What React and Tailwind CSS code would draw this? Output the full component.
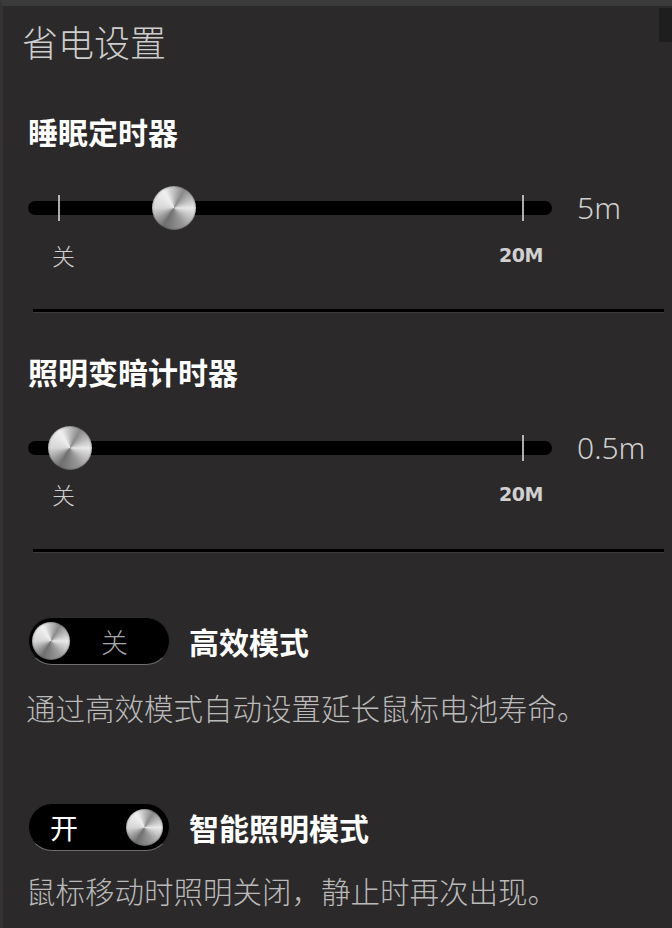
import React from 'react';

const font = "font-['Noto_Sans_CJK_SC','Noto_Sans',sans-serif]";
const knob = 'rounded-full bg-[conic-gradient(from_30deg,#8a8a8a,#e8e8e8,#9a9a9a,#6f6f6f,#d6d6d6,#f0f0f0,#8a8a8a)] shadow-[inset_0_0_2px_rgba(0,0,0,0.6)]';

const Slider = ({ thumbLeft, value }) => (
  <div className="flex items-center h-[46px]">
    <div className="relative w-[524px] h-[14px] rounded-full bg-black">
      <div className="absolute left-[30px] top-[-6px] w-[2px] h-[26px] bg-[#d8d8d8] opacity-80" />
      <div className="absolute left-[494px] top-[-6px] w-[2px] h-[26px] bg-[#d8d8d8] opacity-80" />
      <div
        className={`absolute top-[-15px] w-[44px] h-[44px] ${knob}`}
        style={{ left: thumbLeft }}
      />
    </div>
    <span className="ml-[25px] text-[30px] leading-none font-light text-[#cfcfcf] font-['Noto_Sans',sans-serif]">
      {value}
    </span>
  </div>
);

const Labels = () => (
  <div className="flex items-center h-[26px] ml-[24px]">
    <span className="text-[23px] leading-none text-[#cfcfcf] font-light">关</span>
    <span className="ml-[424px] text-[19px] leading-none font-bold text-[#d0d0d0] font-['DejaVu_Sans',sans-serif] tracking-[-0.5px]">
      20M
    </span>
  </div>
);

const Divider = () => (
  <div className="ml-[30px] w-[631px] h-[3px] bg-black shadow-[0_1px_0_#3c3a3a]" />
);

const Toggle = ({ on }) => (
  <div className="flex items-center w-[142px] h-[48px] rounded-full bg-black border border-[#2a2a2a] border-b-[#6e6e6e] px-[3px] shrink-0">
    {on ? (
      <>
        <span className="ml-[18px] text-[28px] leading-none text-white">开</span>
        <div className={`ml-auto mr-[3px] w-[37px] h-[37px] ${knob}`} />
      </>
    ) : (
      <>
        <div className={`w-[38px] h-[38px] ${knob}`} />
        <span className="ml-[31px] text-[27px] leading-none font-light text-[#a8a8a8]">关</span>
      </>
    )}
  </div>
);

export default function App() {
  return (
    <div className={`relative w-[672px] h-[928px] overflow-hidden bg-[#2b2929] border-t-[6px] border-t-[#3b3b3b] border-l-[3px] border-l-[#343333] ${font}`}>
      <div className="absolute right-0 top-[2px] w-[13px] h-[34px] bg-[#1f1e1e]" />
      <div className="flex flex-col pl-[25px]">
        <h1 className="mt-[14px] -ml-[6px] text-[36px] leading-[42px] font-light text-[#cdcdcd]">省电设置</h1>

        <h2 className="mt-[52px] text-[30px] leading-[34px] font-bold text-white">睡眠定时器</h2>
        <div className="mt-[37px]">
          <Slider thumbLeft={124} value="5m" />
        </div>
        <div className="mt-[11px]">
          <Labels />
        </div>
        <div className="mt-[41px] -ml-[25px]">
          <Divider />
        </div>

        <h2 className="mt-[42px] text-[30px] leading-[34px] font-bold text-white">照明变暗计时器</h2>
        <div className="mt-[37px]">
          <Slider thumbLeft={20} value="0.5m" />
        </div>
        <div className="mt-[10px]">
          <Labels />
        </div>
        <div className="mt-[42px] -ml-[25px]">
          <Divider />
        </div>

        <div className="mt-[65px] flex items-center">
          <Toggle on={false} />
          <span className="ml-[19px] text-[30px] leading-none font-bold text-white">高效模式</span>
        </div>
        <p className="mt-[25px] -ml-[2px] text-[29.5px] leading-[34px] font-light text-[#bababa]">
          通过高效模式自动设置延长鼠标电池寿命。
        </p>

        <div className="mt-[79px] flex items-center">
          <Toggle on />
          <span className="ml-[19px] text-[30px] leading-none font-bold text-white">智能照明模式</span>
        </div>
        <p className="mt-[22px] -ml-[2px] text-[29.5px] leading-[34px] font-light text-[#bababa]">
          鼠标移动时照明关闭，静止时再次出现。
        </p>
      </div>
    </div>
  );
}
